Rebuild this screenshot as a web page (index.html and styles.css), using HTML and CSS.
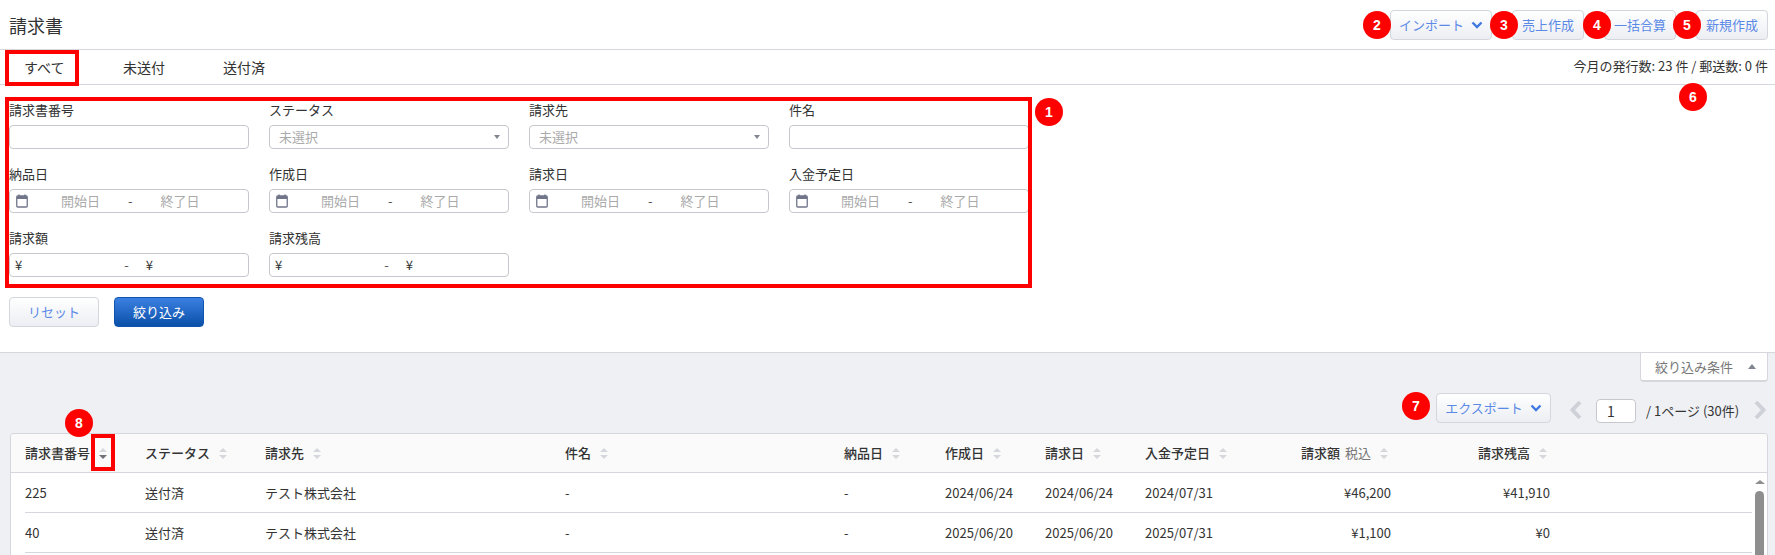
FILE: index.html
```html
<!DOCTYPE html>
<html lang="ja">
<head>
<meta charset="utf-8">
<title>請求書</title>
<link rel="stylesheet" href="styles.css">
</head>
<body>
<header class="top">
  <h1 class="title">請求書</h1>
  <div class="actions">
    <button class="btn btn-menu">インポート<svg class="chev" viewBox="0 0 12 8"><path d="M1.500 1.500 6 6l4.500-4.500"/></svg></button>
    <button class="btn">売上作成</button>
    <button class="btn">一括合算</button>
    <button class="btn">新規作成</button>
  </div>
</header>
<nav class="tabs">
  <a class="tab tab-first">すべて</a>
  <a class="tab tab-second">未送付</a>
  <a class="tab tab-third">送付済</a>
  <span class="stats">今月の発行数: 23 件 / 郵送数: 0 件</span>
</nav>
<section class="filter">
  <div class="fields">
    <div class="field"><label class="label">請求書番号</label><div class="input"></div></div>
    <div class="field"><label class="label">ステータス</label><div class="input select"><span class="ph">未選択</span><i class="caret"></i></div></div>
    <div class="field"><label class="label">請求先</label><div class="input select"><span class="ph">未選択</span><i class="caret"></i></div></div>
    <div class="field"><label class="label">件名</label><div class="input"></div></div>

    <div class="field"><label class="label">納品日</label><div class="input date"><svg class="cal" viewBox="0 0 12 14"><path class="cal-top" d="M1 2h10v3H1z"/><rect x=".75" y="2" width="10.5" height="11" rx="1"/><path class="cal-pin" d="M3 .5v2M9 .5v2"/></svg><span class="ph start">開始日</span><span class="dash">-</span><span class="ph end">終了日</span></div></div>
    <div class="field"><label class="label">作成日</label><div class="input date"><svg class="cal" viewBox="0 0 12 14"><path class="cal-top" d="M1 2h10v3H1z"/><rect x=".75" y="2" width="10.5" height="11" rx="1"/><path class="cal-pin" d="M3 .5v2M9 .5v2"/></svg><span class="ph start">開始日</span><span class="dash">-</span><span class="ph end">終了日</span></div></div>
    <div class="field"><label class="label">請求日</label><div class="input date"><svg class="cal" viewBox="0 0 12 14"><path class="cal-top" d="M1 2h10v3H1z"/><rect x=".75" y="2" width="10.5" height="11" rx="1"/><path class="cal-pin" d="M3 .5v2M9 .5v2"/></svg><span class="ph start">開始日</span><span class="dash">-</span><span class="ph end">終了日</span></div></div>
    <div class="field"><label class="label">入金予定日</label><div class="input date"><svg class="cal" viewBox="0 0 12 14"><path class="cal-top" d="M1 2h10v3H1z"/><rect x=".75" y="2" width="10.5" height="11" rx="1"/><path class="cal-pin" d="M3 .5v2M9 .5v2"/></svg><span class="ph start">開始日</span><span class="dash">-</span><span class="ph end">終了日</span></div></div>

    <div class="field"><label class="label">請求額</label><div class="input money"><span class="yen">¥</span><span class="dash">-</span><span class="yen yen2">¥</span></div></div>
    <div class="field"><label class="label">請求残高</label><div class="input money"><span class="yen">¥</span><span class="dash">-</span><span class="yen yen2">¥</span></div></div>
  </div>
  <div class="filter-btns">
    <button class="btn btn-wide">リセット</button>
    <button class="btn btn-wide btn-primary">絞り込み</button>
  </div>
</section>
<section class="lower">
  <div class="fold">絞り込み条件<i class="fold-caret"></i></div>
  <div class="toolbar">
    <button class="btn btn-menu btn-export">エクスポート<svg class="chev" viewBox="0 0 12 8"><path d="M1.500 1.500 6 6l4.500-4.500"/></svg></button>
    <svg class="pager-arrow" viewBox="0 0 12 20"><path d="M10 2 2.500 10 10 18"/></svg>
    <div class="page-input">1</div>
    <span class="page-text">/ 1ページ (30件)</span>
    <svg class="pager-arrow pager-next" viewBox="0 0 12 20"><path d="M2 2l7.500 8L2 18"/></svg>
  </div>
  <div class="table">
    <div class="row head">
      <div class="cell">請求書番号<i class="sort sort-desc"></i></div>
      <div class="cell">ステータス<i class="sort"></i></div>
      <div class="cell">請求先<i class="sort"></i></div>
      <div class="cell">件名<i class="sort"></i></div>
      <div class="cell">納品日<i class="sort"></i></div>
      <div class="cell">作成日<i class="sort"></i></div>
      <div class="cell">請求日<i class="sort"></i></div>
      <div class="cell">入金予定日<i class="sort"></i></div>
      <div class="cell num">請求額<small class="tax">税込</small><i class="sort"></i></div>
      <div class="cell num">請求残高<i class="sort"></i></div>
    </div>
    <div class="body">
      <div class="rows">
        <div class="row">
          <div class="cell">225</div><div class="cell">送付済</div><div class="cell">テスト株式会社</div><div class="cell">-</div><div class="cell">-</div><div class="cell">2024/06/24</div><div class="cell">2024/06/24</div><div class="cell">2024/07/31</div><div class="cell num">¥46,200</div><div class="cell num">¥41,910</div>
        </div>
        <div class="row">
          <div class="cell">40</div><div class="cell">送付済</div><div class="cell">テスト株式会社</div><div class="cell">-</div><div class="cell">-</div><div class="cell">2025/06/20</div><div class="cell">2025/06/20</div><div class="cell">2025/07/31</div><div class="cell num">¥1,100</div><div class="cell num">¥0</div>
        </div>
      </div>
      <div class="scrollbar"><i class="scroll-up"></i><div class="thumb"></div></div>
    </div>
  </div>
</section>

<div class="mark mark-tab"></div>
<div class="mark mark-filter"></div>
<div class="mark mark-sort"></div>
<span class="badge b1">1</span>
<span class="badge b2">2</span>
<span class="badge b3">3</span>
<span class="badge b4">4</span>
<span class="badge b5">5</span>
<span class="badge b6">6</span>
<span class="badge b7">7</span>
<span class="badge b8">8</span>
</body>
</html>
```
FILE: styles.css
```css
* { box-sizing: border-box; }
html, body { margin: 0; height: 555px; overflow: hidden; }
body {
  position: relative;
  background: #fff;
  color: #333;
  font: 13px/20px "Noto Sans CJK JP", "Noto Sans", sans-serif;
}
button { font: inherit; padding: 0; cursor: pointer; }

.top {
  height: 50px;
  display: flex;
  align-items: flex-start;
  justify-content: space-between;
  padding: 10px 7px 0 9px;
  border-bottom: 1px solid #d5d7dc;
}
.title { margin: 0; font-size: 18px; line-height: 30px; font-weight: 400; color: #333; }
.actions { display: flex; gap: 20px; }

.btn {
  height: 30px;
  width: 72px;
  display: inline-flex;
  align-items: center;
  justify-content: center;
  border: 1px solid #d3d6dc;
  border-radius: 4px;
  color: #5b8ae6;
  background: linear-gradient(#fff, #eceef3);
}
.btn-menu { width: 102px; gap: 7px; }
.btn-export { width: 115px; }
.btn-wide { width: 90px; }
.btn-primary {
  color: #fff;
  border-color: #0f55ad;
  background: linear-gradient(#3c80e2, #0a50a8);
}
.chev { width: 12px; height: 8px; fill: none; stroke: #3f78e0; stroke-width: 2.4; }

.tabs {
  height: 35px;
  display: flex;
  align-items: center;
  padding: 0 7px 0 24px;
  border-bottom: 1px solid #d5d7dc;
  font-size: 14px;
}
.tab { color: #333; width: 42px; white-space: nowrap; }
.tab-second { margin-left: 57px; }
.tab-third { margin-left: 58px; }
.stats { margin-left: auto; padding-bottom: 2px; font-size: 13px; }

.filter { padding: 16px 0 25px 9px; height: 267px; overflow: hidden; }
.fields { display: grid; grid-template-columns: repeat(4, 240px); column-gap: 20px; row-gap: 16px; }
.label { display: block; height: 24px; line-height: 17px; color: #333; }
.input {
  height: 24px;
  display: flex;
  align-items: center;
  border: 1px solid #c6c8cd;
  border-radius: 4px;
  background: #fff;
  white-space: nowrap;
}
.ph { color: #aaa; }
.select { padding: 0 8px 0 9px; justify-content: space-between; }
.caret { border: 3px solid transparent; border-top: 4px solid #80858f; border-bottom: 0; }
.date { padding-left: 6px; }
.cal { width: 12px; height: 14px; flex: none; fill: none; stroke: #71768a; stroke-width: 1.3; }
.cal-top { fill: #71768a; stroke: none; }
.cal-pin { stroke-width: 1.5; }
.start { margin-left: 33px; }
.dash { color: #555; }
.date .dash { margin-left: 28px; }
.end { margin-left: 28px; }
.money { padding-left: 5px; }
.money .dash { margin-left: 102px; }
.yen2 { margin-left: 17px; }

.filter-btns { display: flex; gap: 15px; margin-top: 20px; }

.lower {
  height: 203px;
  background: #eef0f4;
  border-top: 1px solid #d5d7dc;
  display: flex;
  flex-direction: column;
  padding: 0 7px 0 10px;
}
.fold {
  align-self: flex-end;
  width: 128px;
  height: 29px;
  display: flex;
  align-items: center;
  justify-content: space-between;
  padding: 0 11px 0 14px;
  background: #fff;
  color: #777;
  border: 1px solid #d5d7dc;
  border-top: 0;
  border-bottom-width: 2px;
  border-radius: 0 0 4px 4px;
}
.fold-caret { border: 4px solid transparent; border-bottom: 5px solid #80858f; border-top: 0; }

.toolbar { display: flex; align-items: center; margin-top: 11px; height: 30px; justify-content: flex-end; }
.pager-arrow { width: 12px; height: 20px; margin-left: 19px; margin-top: 3px; fill: none; stroke: #ced1d7; stroke-width: 4; }
.pager-next { margin-left: 16px; margin-right: 2px; }
.page-input {
  width: 40px;
  height: 24px;
  margin: 5px 0 0 14px;
  padding-left: 10px;
  line-height: 22px;
  font-size: 14px;
  background: #fff;
  border: 1px solid #c6c8cd;
  border-radius: 4px;
}
.page-text { margin-left: 10px; margin-top: 5px; width: 92px; white-space: nowrap; }

.table {
  margin-top: 10px;
  background: #fff;
  border: 1px solid #d5d7dc;
  border-bottom: 0;
  border-radius: 4px 4px 0 0;
  flex: 1;
  overflow: hidden;
}
.row {
  display: grid;
  grid-template-columns: 120px 120px 300px 279px 101px 100px 100px 100px 146px 159px;
  align-items: center;
  height: 40px;
  margin-left: 14px;
  border-bottom: 1px solid #d5d7dc;
}
.head {
  height: 39px;
  margin-left: 0;
  padding-left: 14px;
  background: #fafafa;
  font-weight: 500;
}
.cell { display: flex; align-items: center; white-space: nowrap; }
.num { justify-content: flex-end; }
.head .num { padding-right: 3px; }
.tax { font-size: 13px; color: #777; font-weight: 400; margin-left: 5px; }
.sort {
  display: inline-flex;
  flex-direction: column;
  gap: 3px;
  margin-left: 9px;
  width: 8px;
  flex: none;
}
.sort::before { content: ""; border: 4px solid transparent; border-bottom: 4px solid #d5d7dc; border-top: 0; }
.sort::after { content: ""; border: 4px solid transparent; border-top: 4px solid #d5d7dc; border-bottom: 0; }
.sort-desc::after { border-top-color: #6e7178; }

.body { display: flex; }
.rows { flex: 1; }
.scrollbar { width: 15px; display: flex; flex-direction: column; align-items: center; padding-top: 7px; }
.scroll-up { border: 5px solid transparent; border-bottom: 4px solid #8e8e8e; border-top: 0; }
.thumb { width: 9px; height: 80px; margin-top: 7px; background: #8e8e8e; border-radius: 4.5px; }

.mark { position: absolute; border: 4px solid #f00; pointer-events: none; }
.mark-tab { left: 5px; top: 50px; width: 74px; height: 36px; }
.mark-filter { left: 5px; top: 97px; width: 1027px; height: 191px; }
.mark-sort { left: 91px; top: 434px; width: 24px; height: 37px; }

.badge {
  position: absolute;
  width: 28px;
  height: 28px;
  border-radius: 50%;
  background: #f00;
  color: #fff;
  font: bold 14px/28px "Liberation Sans", sans-serif;
  text-align: center;
}
.b1 { left: 1035px; top: 98px; }
.b2 { left: 1363px; top: 11px; }
.b3 { left: 1490px; top: 11px; }
.b4 { left: 1583px; top: 11px; }
.b5 { left: 1673px; top: 11px; }
.b6 { left: 1679px; top: 83px; }
.b7 { left: 1402px; top: 392px; }
.b8 { left: 65px; top: 409px; }
```
